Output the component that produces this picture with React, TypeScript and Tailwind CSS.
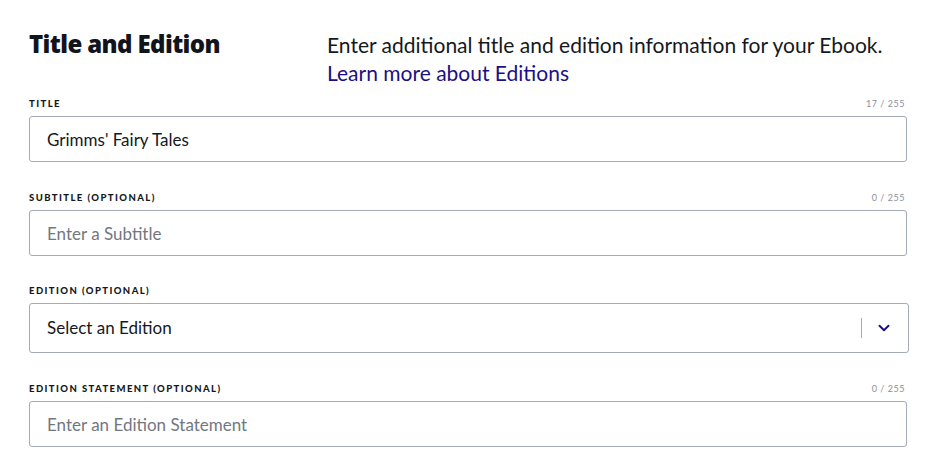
import { ChevronDown } from 'lucide-react';

const FIELDS = [
  { label: 'Title', optional: false, value: "Grimms' Fairy Tales", placeholder: '', count: '17 / 255' },
  { label: 'Subtitle', optional: true, value: '', placeholder: 'Enter a Subtitle', count: '0 / 255' },
];

function Label({ text, count }: { text: string; count?: string }) {
  return (
    <div className="mb-[6px] flex h-[12px] items-end justify-between leading-[12px]">
      <span className="text-[9.5px] font-black uppercase tracking-[0.15em] text-[#141821]">{text}</span>
      {count && <span className="pr-[2px] text-[9px] tracking-[0.06em] text-[#8a8f98]">{count}</span>}
    </div>
  );
}

function TextField({ label, value, placeholder, count }: { label: string; value: string; placeholder: string; count: string }) {
  return (
    <div className="w-[878px]">
      <Label text={label} count={count} />
      <input
        readOnly
        value={value}
        placeholder={placeholder}
        className="h-[46px] w-full rounded-[3px] border border-[#a3abb7] bg-white px-[17px] text-[17px] text-[#141821] outline-none placeholder:text-[#737780]"
      />
    </div>
  );
}

export default function App() {
  return (
    <div className="min-h-[471px] bg-white pl-[29px] pt-[30px] text-[#141821]" style={{ fontFamily: 'Lato, "Open Sans", sans-serif' }}>
      <div className="flex">
        <h2
          className="w-[298px] text-[24px] font-extrabold leading-[28px] tracking-[-0.025em] text-[#11141c]"
          style={{ fontFamily: '"Open Sans", Lato, sans-serif' }}
        >
          Title and Edition
        </h2>
        <div className="pt-[1px] text-[21px] leading-[28px]">
          <p>Enter additional title and edition information for your Ebook.</p>
          <a href="#" className="text-[#1b0f83]">Learn more about Editions</a>
        </div>
      </div>
      <div className="mt-[11px] flex flex-col gap-[30px]">
        {FIELDS.map((f) => (
          <TextField
            key={f.label}
            label={f.optional ? `${f.label} (optional)` : f.label}
            value={f.value}
            placeholder={f.placeholder}
            count={f.count}
          />
        ))}
        <div className="-mt-[1px] w-[880px]">
          <Label text="Edition (optional)" />
          <div className="flex h-[50px] items-center rounded-[3px] border border-[#a3abb7] pl-[17px] pr-[15px]">
            <span className="flex-1 text-[17px]">Select an Edition</span>
            <span className="h-[20px] w-px bg-[#a3abb7]" />
            <ChevronDown className="ml-[13px] h-[18px] w-[18px] text-[#1b0f83]" strokeWidth={2.5} />
          </div>
        </div>
        <TextField label="Edition Statement (optional)" value="" placeholder="Enter an Edition Statement" count="0 / 255" />
      </div>
    </div>
  );
}
